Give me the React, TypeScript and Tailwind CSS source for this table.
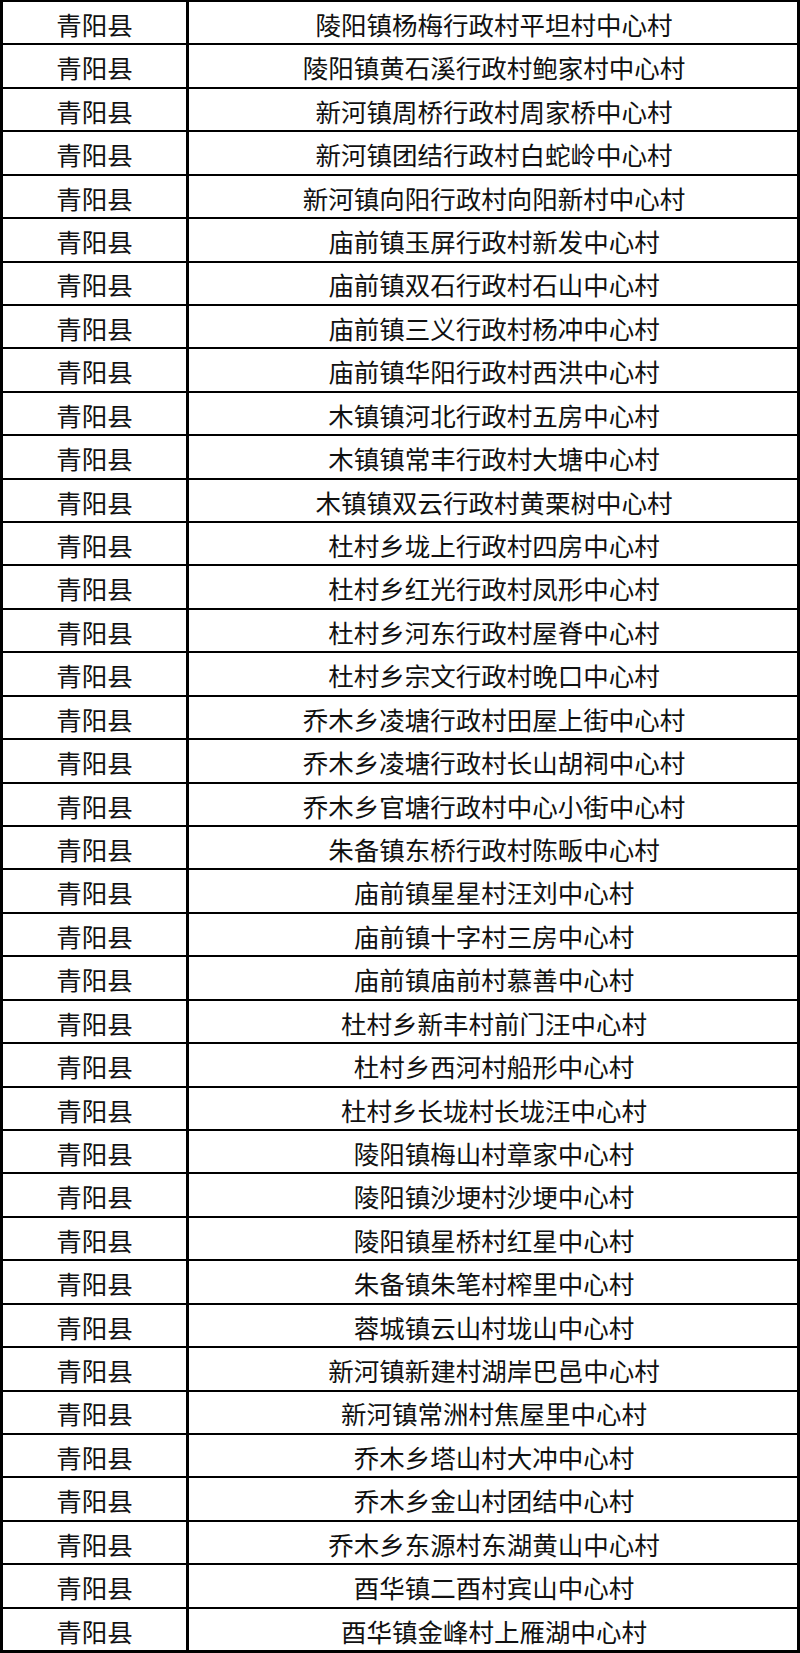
import React from "react";

const rows = [
  "陵阳镇杨梅行政村平坦村中心村",
  "陵阳镇黄石溪行政村鲍家村中心村",
  "新河镇周桥行政村周家桥中心村",
  "新河镇团结行政村白蛇岭中心村",
  "新河镇向阳行政村向阳新村中心村",
  "庙前镇玉屏行政村新发中心村",
  "庙前镇双石行政村石山中心村",
  "庙前镇三义行政村杨冲中心村",
  "庙前镇华阳行政村西洪中心村",
  "木镇镇河北行政村五房中心村",
  "木镇镇常丰行政村大塘中心村",
  "木镇镇双云行政村黄栗树中心村",
  "杜村乡垅上行政村四房中心村",
  "杜村乡红光行政村凤形中心村",
  "杜村乡河东行政村屋脊中心村",
  "杜村乡宗文行政村晚口中心村",
  "乔木乡凌塘行政村田屋上街中心村",
  "乔木乡凌塘行政村长山胡祠中心村",
  "乔木乡官塘行政村中心小街中心村",
  "朱备镇东桥行政村陈畈中心村",
  "庙前镇星星村汪刘中心村",
  "庙前镇十字村三房中心村",
  "庙前镇庙前村慕善中心村",
  "杜村乡新丰村前门汪中心村",
  "杜村乡西河村船形中心村",
  "杜村乡长垅村长垅汪中心村",
  "陵阳镇梅山村章家中心村",
  "陵阳镇沙埂村沙埂中心村",
  "陵阳镇星桥村红星中心村",
  "朱备镇朱笔村榨里中心村",
  "蓉城镇云山村垅山中心村",
  "新河镇新建村湖岸巴邑中心村",
  "新河镇常洲村焦屋里中心村",
  "乔木乡塔山村大冲中心村",
  "乔木乡金山村团结中心村",
  "乔木乡东源村东湖黄山中心村",
  "酉华镇二酉村宾山中心村",
  "酉华镇金峰村上雁湖中心村",
];

export default function App() {
  return (
    <div
      className="w-[800px] h-[1653px] bg-white flex flex-col border-l-[3px] border-t-[2px] border-r-[3px] border-b-[3px] border-black text-[25.5px] text-[#111]"
      style={{ fontFamily: '"Noto Sans CJK SC", "Noto Sans CJK TC", serif' }}
    >
      {rows.map((r, i) => (
        <div
          key={i}
          className={`flex-1 flex ${i > 0 ? "border-t-[2px] border-black" : ""}`}
        >
          <div className="w-[186px] shrink-0 border-r-[3px] border-black flex items-center justify-center leading-none pt-[2px]">
            青阳县
          </div>
          <div className="flex-1 flex items-center justify-center leading-none pt-[2px] pl-[2px]">
            {r}
          </div>
        </div>
      ))}
    </div>
  );
}
